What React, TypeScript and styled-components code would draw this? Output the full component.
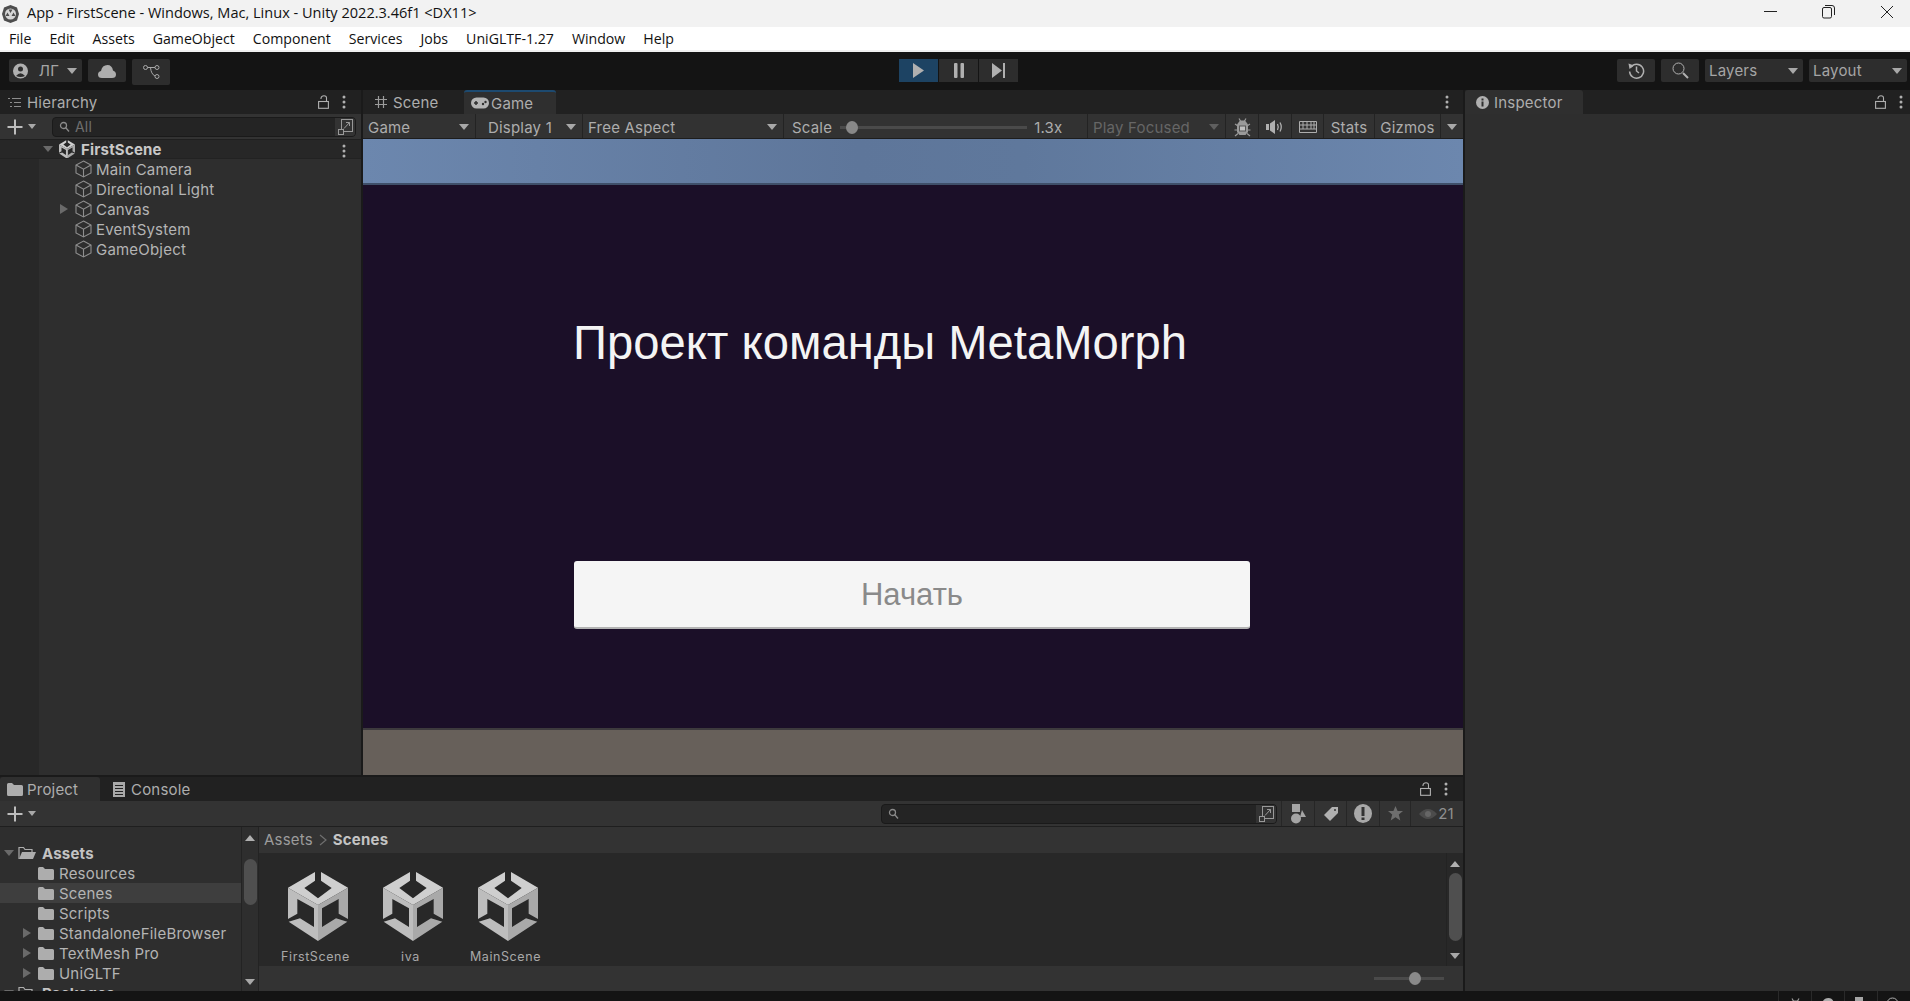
import React from 'react';
import styled, { createGlobalStyle } from 'styled-components';

const Global = createGlobalStyle`
  html, body {
    margin: 0;
    padding: 0;
    background: #141414;
    overflow: hidden;
  }
  * { box-sizing: border-box; }
`;

const Root = styled.div`
  width: 1910px;
  height: 1001px;
  display: flex;
  flex-direction: column;
  overflow: hidden;
  font-family: Inter, "Liberation Sans", sans-serif;
  font-size: 15px;
  letter-spacing: 0.2px;
  color: #b4b4b4;
  background: #141414;
`;

/* window chrome */
const TitleBar = styled.div`
  height: 27px;
  flex: none;
  background: #f2f2f2;
  display: flex;
  align-items: center;
  padding-left: 2px;
  color: #111;
  font-family: "Open Sans", "Liberation Sans", sans-serif;
  font-size: 14.55px;
  letter-spacing: 0;
`;

const TitleText = styled.span`
  margin: 0 0 3px 8px;
`;

const WindowButtons = styled.div`
  margin-left: auto;
  display: flex;
  align-items: center;
  height: 100%;
  padding: 0 16px 3px 0;
  gap: 45px;
  color: #222;
`;

const MenuBar = styled.div`
  height: 25px;
  flex: none;
  background: #fff;
  border-bottom: 2px solid #f0f0f0;
  display: flex;
  align-items: center;
  color: #111;
  font-family: "Open Sans", "Liberation Sans", sans-serif;
  font-size: 14.15px;
  letter-spacing: 0;
`;

const MenuItem = styled.span`
  padding: 0 9px;
`;

/* main toolbar */
const TopToolbar = styled.div`
  height: 38px;
  flex: none;
  background: #141414;
  display: grid;
  grid-template-columns: 1fr auto 1fr;
  align-items: start;
  padding: 7px 3px 0 9px;
`;

const ToolGroup = styled.div<{ $end?: boolean }>`
  display: flex;
  gap: 6px;
  justify-content: ${(p) => (p.$end ? 'flex-end' : 'flex-start')};
`;

const ToolButton = styled.div<{ $w: number; $h?: number }>`
  width: ${(p) => p.$w}px;
  height: ${(p) => p.$h || 23}px;
  background: #2d2d2d;
  border-radius: 2px;
  display: flex;
  align-items: center;
  justify-content: center;
  color: #a5a5a5;
  flex: none;
`;

const Dropdown = styled(ToolButton)`
  justify-content: space-between;
  padding: 0 5px 0 4px;
`;

const AccountName = styled.span`
  margin-left: 3px;
`;

const PlayGroup = styled.div`
  display: flex;
  gap: 1px;
  margin-left: 1px;
`;

const PlayButton = styled.div<{ $active?: boolean }>`
  width: 39px;
  height: 23px;
  background: ${(p) => (p.$active ? '#1d4363' : '#2d2d2d')};
  display: flex;
  align-items: center;
  justify-content: center;
  color: #b0b0b0;
`;

/* dock */
const Workspace = styled.div`
  height: 901px;
  flex: none;
  display: flex;
  background: #1a1a1a;
`;

const LeftColumn = styled.div`
  width: 1463px;
  flex: none;
  display: flex;
  flex-direction: column;
  gap: 2px;
`;

const TopRow = styled.div`
  height: 685px;
  flex: none;
  display: flex;
  gap: 2px;
`;

const Panel = styled.div<{ $w?: number }>`
  ${(p) => (p.$w ? `width: ${p.$w}px; flex: none;` : 'flex: 1; min-width: 0;')}
  display: flex;
  flex-direction: column;
  background: #2e2e2e;
  overflow: hidden;
`;

const InspectorPanel = styled(Panel)`
  margin-left: 2px;
`;

const TabStrip = styled.div`
  height: 24px;
  flex: none;
  background: #212121;
  display: flex;
  align-items: stretch;
  position: relative;
`;

const Tab = styled.div<{ $w: number; $on?: boolean; $blue?: boolean; $pad?: number; $gap?: number }>`
  width: ${(p) => p.$w}px;
  flex: none;
  display: flex;
  align-items: center;
  gap: ${(p) => p.$gap ?? 4}px;
  padding-left: ${(p) => p.$pad ?? 8}px;
  background: ${(p) => (p.$on ? '#2f2f2f' : 'transparent')};
  border-top: ${(p) => (p.$blue ? '2px solid #1d4a70' : 'none')};
  border-radius: 3px 3px 0 0;
  color: #adadad;
`;

const TabTools = styled.div<{ $pr: number }>`
  margin-left: auto;
  display: flex;
  align-items: center;
  gap: 13px;
  padding-right: ${(p) => p.$pr}px;
  color: #b0b0b0;
`;

const PanelBar = styled.div`
  height: 26px;
  flex: none;
  background: #333;
  border-bottom: 1px solid #1f1f1f;
  display: flex;
  align-items: center;
`;

const AddButton = styled.div`
  width: 52px;
  flex: none;
  display: flex;
  align-items: center;
  padding-left: 7px;
  gap: 5px;
  color: #bdbdbd;
`;

const SearchField = styled.div<{ $w: number; $ml?: number }>`
  width: ${(p) => p.$w}px;
  flex: none;
  margin-left: ${(p) => p.$ml ?? 0}px;
  height: 20px;
  background: #242424;
  border: 1px solid #1a1a1a;
  border-radius: 4px;
  display: flex;
  align-items: center;
  padding-left: 6px;
  gap: 2px;
  color: #6f6f6f;
  font-size: 14px;
  overflow: hidden;
`;

const SearchEnd = styled.div`
  margin-left: auto;
  width: 20px;
  height: 100%;
  flex: none;
  background: #333;
  display: flex;
  align-items: center;
  justify-content: center;
  color: #999;
`;

/* hierarchy */
const TreeArea = styled.div`
  flex: 1;
  background: linear-gradient(to right, #282828 39px, #2e2e2e 39px);
`;

const SceneRow = styled.div`
  height: 19px;
  background: #272727;
  border-bottom: 1px solid #222;
  display: flex;
  align-items: center;
  padding-left: 43px;
  color: #c8c8c8;
  font-weight: 700;
  gap: 6px;
  position: relative;
`;

const SceneMenu = styled.div`
  position: absolute;
  right: 15px;
  top: 3px;
  color: #b0b0b0;
`;

const TreeRow = styled.div<{ $pad: number; $on?: boolean }>`
  height: 20px;
  display: flex;
  align-items: center;
  padding-left: ${(p) => p.$pad}px;
  gap: 4px;
  white-space: nowrap;
  background: ${(p) => (p.$on ? '#3e3e3e' : 'transparent')};
`;

const TreeSpacer = styled.span<{ $w: number }>`
  width: ${(p) => p.$w}px;
  flex: none;
  display: flex;
  align-items: center;
`;

const FolderLabel = styled.span`
  margin-left: 1px;
`;

const BoldLabel = styled.span`
  font-weight: 700;
  color: #c4c4c4;
`;

const RootFolderLabel = styled(BoldLabel)`
  margin-left: 2px;
`;

const Caret = styled.span<{ $size?: number; $color?: string }>`
  display: inline-block;
  flex: none;
  width: 0;
  height: 0;
  border-left: ${(p) => p.$size ?? 5}px solid transparent;
  border-right: ${(p) => p.$size ?? 5}px solid transparent;
  border-top: ${(p) => (p.$size ?? 5) + 1}px solid ${(p) => p.$color ?? '#a8a8a8'};
`;

const CaretRight = styled.span`
  display: inline-block;
  flex: none;
  width: 0;
  height: 0;
  border-top: 5px solid transparent;
  border-bottom: 5px solid transparent;
  border-left: 8px solid #6a6a6a;
`;

const CaretUp = styled.span`
  display: inline-block;
  flex: none;
  width: 0;
  height: 0;
  border-left: 5px solid transparent;
  border-right: 5px solid transparent;
  border-bottom: 6px solid #b0b0b0;
`;

/* game view */
const GameBar = styled.div`
  height: 25px;
  flex: none;
  background: #323232;
  border-bottom: 1px solid #1d1d1d;
  display: flex;
  align-items: stretch;
`;

const Cell = styled.div<{ $w: number; $pl?: number; $muted?: boolean; $center?: boolean; $noLine?: boolean }>`
  width: ${(p) => p.$w}px;
  flex: none;
  display: flex;
  align-items: center;
  justify-content: ${(p) => (p.$center ? 'center' : 'space-between')};
  padding: ${(p) => (p.$center ? '2px 0 0' : `2px 6px 0 ${p.$pl ?? 5}px`)};
  border-right: ${(p) => (p.$noLine ? 'none' : '1px solid #232323')};
  color: ${(p) => (p.$muted ? '#666' : '#adadad')};
  white-space: nowrap;
`;

const ScaleCell = styled(Cell)`
  justify-content: flex-start;
  padding-left: 8px;
`;

const SliderTrack = styled.div<{ $w: number; $ml: number }>`
  width: ${(p) => p.$w}px;
  margin-left: ${(p) => p.$ml}px;
  height: 3px;
  background: #4a4a4a;
  position: relative;
  flex: none;
`;

const SliderThumb = styled.div<{ $left: number; $bg: string }>`
  position: absolute;
  left: ${(p) => p.$left}px;
  top: -5px;
  width: 12px;
  height: 13px;
  border-radius: 50%;
  background: ${(p) => p.$bg};
`;

const ScaleValue = styled.span`
  margin-left: 7px;
`;

const Sky = styled.div`
  height: 46px;
  flex: none;
  background: linear-gradient(to right, #6c87ae, #5e769a 45%, #5f789c 60%, #6c87ae);
  border-bottom: 2px solid #3f4f69;
`;

const Scene = styled.div`
  flex: 1;
  background: #1b0f28;
  padding: 132px 0 0 210px;
`;

const Heading = styled.h1`
  margin: 0;
  font-family: "Liberation Sans", Arial, sans-serif;
  font-weight: 400;
  font-size: 47.2px;
  line-height: 52px;
  letter-spacing: 0;
  color: #f4f4f4;
  white-space: nowrap;
`;

const StartButton = styled.div`
  margin: 192px 0 0 1px;
  width: 676px;
  height: 68px;
  padding-top: 2px;
  background: #f5f5f5;
  border-bottom: 2px solid #b3b3b3;
  border-radius: 3px;
  display: flex;
  align-items: center;
  justify-content: center;
  font-family: "Liberation Sans", Arial, sans-serif;
  font-size: 31px;
  letter-spacing: 0;
  color: #8a8a8a;
`;

const Ground = styled.div`
  height: 47px;
  flex: none;
  background: #67605a;
  border-top: 2px solid #3d3a3d;
`;

/* project window */
const ProjectBody = styled.div`
  flex: 1;
  display: flex;
  min-height: 0;
`;

const ProjectTree = styled.div`
  width: 241px;
  flex: none;
  padding-top: 16px;
  overflow: hidden;
`;

const Scroller = styled.div<{ $w: number }>`
  width: ${(p) => p.$w}px;
  flex: none;
  display: flex;
  flex-direction: column;
  align-items: center;
  padding: 8px 0 6px;
  border-left: 1px solid #232323;
`;

const ScrollThumb = styled.div<{ $h: number; $mt: number }>`
  width: 13px;
  height: ${(p) => p.$h}px;
  margin-top: ${(p) => p.$mt}px;
  border-radius: 7px;
  background: #4f4f4f;
`;

const ScrollDown = styled(Caret)`
  margin-top: auto;
`;

const ProjectMain = styled.div`
  flex: 1;
  display: flex;
  flex-direction: column;
  min-width: 0;
  border-left: 1px solid #232323;
`;

const Breadcrumb = styled.div`
  height: 26px;
  flex: none;
  background: #333;
  display: flex;
  align-items: center;
  padding: 0 0 1px 5px;
  gap: 6px;
  color: #9c9c9c;
`;

const AssetArea = styled.div`
  height: 113px;
  flex: none;
  background: #282828;
  display: flex;
`;

const AssetGrid = styled.div`
  flex: 1;
  display: flex;
  gap: 15px;
  padding: 18px 0 0 19px;
`;

const AssetItem = styled.div`
  width: 80px;
  display: flex;
  flex-direction: column;
  align-items: center;
  font-size: 12.5px;
  letter-spacing: 0.6px;
  color: #a8a8a8;
`;

const AssetLabel = styled.span`
  margin-top: 8px;
  margin-left: -5px;
  white-space: nowrap;
`;

const AssetScroller = styled(Scroller)`
  padding: 8px 0 7px;
`;

const Footer = styled.div`
  flex: 1;
  background: #333;
  display: flex;
  align-items: center;
  justify-content: flex-end;
  padding-right: 19px;
`;

const FilterButtons = styled.div`
  display: flex;
  align-items: stretch;
  height: 100%;
  margin-left: 4px;
  color: #a0a0a0;
`;

const FilterCell = styled.div<{ $w: number }>`
  width: ${(p) => p.$w}px;
  display: flex;
  align-items: center;
  justify-content: center;
  border-left: 1px solid #262626;
  gap: 1px;
`;

const HiddenCount = styled.span`
  color: #8f8f8f;
  font-size: 15px;
`;

/* status bar */
const StatusBar = styled.div`
  height: 10px;
  flex: none;
  background: #141414;
  display: flex;
  justify-content: flex-end;
  overflow: hidden;
`;

const StatusItem = styled.div`
  width: 33px;
  height: 18px;
  padding-top: 6px;
  border-left: 1px solid #2a2a2a;
  display: flex;
  justify-content: center;
  color: #a0a0a0;
`;

type IconProps = { s?: number };

const UnityLogo = ({ s = 60 }: IconProps) => (
  <svg width={s} height={(s * 70) / 60} viewBox="0 0 180 210">
    <path fill="#cfcfcf" d="M0 50L81 3V29L49 51L90 82L131 51L99 29V3L180 50L90 102Z" />
    <path fill="#bdbdbd" d="M0 50L90 102V210L2 152L36 142L78 168V112L28 84V128L0 144Z" />
    <path fill="#a9a9a9" d="M180 50L90 102V210L178 152L144 142L102 168V112L152 84V128L180 144Z" />
  </svg>
);

const CubeIcon = () => (
  <svg width="17" height="18" viewBox="0 0 17 18" fill="none" stroke="#8f8f8f" strokeWidth="1.1">
    <path d="M8.5 1L16 5V13L8.5 17L1 13V5Z" />
    <path d="M1 5L8.5 9.2L16 5M8.5 9.2V17" />
  </svg>
);

const Folder = ({ s = 16 }: IconProps) => (
  <svg width={s} height={(s * 13) / 16} viewBox="0 0 16 13">
    <path fill="#adadad" d="M0 1.5Q0 0 1.5 0H5L7 2H14.5Q16 2 16 3.5V11.5Q16 13 14.5 13H1.5Q0 13 0 11.5Z" />
  </svg>
);

const OpenFolder = () => (
  <svg width="18" height="14" viewBox="0 0 18 14" fill="none" stroke="#adadad" strokeWidth="1.2">
    <path d="M1 13V1.5H5.5L7 3.5H14V6" />
    <path fill="#adadad" stroke="none" d="M1 13L4 6H18L15 13Z" />
  </svg>
);

const Kebab = () => (
  <svg width="4" height="14" viewBox="0 0 4 14" fill="currentColor">
    <circle cx="2" cy="2" r="1.5" />
    <circle cx="2" cy="7" r="1.5" />
    <circle cx="2" cy="12" r="1.5" />
  </svg>
);

const Lock = () => (
  <svg width="11" height="14" viewBox="0 0 11 14" fill="none" stroke="currentColor" strokeWidth="1.1">
    <rect x="0.6" y="6.5" width="9.8" height="6.8" />
    <path d="M8.5 6.5V3Q8.5 0.7 6 0.7T3 3V4" />
  </svg>
);

const Plus = () => (
  <svg width="16" height="16" viewBox="0 0 16 16" fill="currentColor">
    <rect x="7" y="0.5" width="2" height="15" />
    <rect x="0.5" y="7" width="15" height="2" />
  </svg>
);

const Magnifier = () => (
  <svg width="14" height="12" viewBox="0 0 14 12" fill="none" stroke="#8a8a8a" strokeWidth="1.3">
    <circle cx="4.5" cy="4.5" r="3" />
    <path d="M6.8 6.8L10 10.5" />
  </svg>
);

const ExpandSearch = () => (
  <svg width="15" height="16" viewBox="0 0 15 16" fill="none" stroke="currentColor">
    <rect x="3.5" y="0.5" width="11" height="12" />
    <rect x="0.5" y="10.5" width="5" height="5" fill="#333" />
    <path d="M6 9.5L11.5 3.5M8 3.5H11.5V7" />
  </svg>
);

const GameIcon = () => (
  <svg width="18" height="12" viewBox="0 0 18 12">
    <rect x="0" y="0.5" width="18" height="11" rx="5.5" fill="#b4b4b4" />
    <path stroke="#2f2f2f" strokeWidth="1.5" d="M3 6H7M5 4V8" />
    <circle cx="12" cy="7" r="1.2" fill="#2f2f2f" />
    <circle cx="14.5" cy="5" r="1.2" fill="#2f2f2f" />
  </svg>
);

const HashIcon = () => (
  <svg width="14" height="14" viewBox="0 0 14 14" stroke="#9c9c9c" strokeWidth="1.2">
    <path d="M4.5 1V13M9.5 1V13M1 4.5H13M1 9.5H13" />
  </svg>
);

const ListIcon = () => (
  <svg width="13" height="11" viewBox="0 0 13 11" stroke="#8d8d8d" strokeWidth="1">
    <path d="M0 1.5H2M4 1.5H13M2 5.5H4M6 5.5H13M2 9.5H4M6 9.5H13" />
  </svg>
);

const InfoIcon = () => (
  <svg width="13" height="13" viewBox="0 0 13 13">
    <circle cx="6.5" cy="6.5" r="6.5" fill="#b0b0b0" />
    <rect x="5.5" y="5.5" width="2" height="5" fill="#2f2f2f" />
    <rect x="5.5" y="2.5" width="2" height="2" fill="#2f2f2f" />
  </svg>
);

const ConsoleIcon = () => (
  <svg width="12" height="15" viewBox="0 0 12 15">
    <rect width="12" height="15" fill="#a8a8a8" />
    <path stroke="#212121" d="M2 3.5H10M2 6.5H10M2 9.5H10M2 12.5H10" />
  </svg>
);

const BugIcon = () => (
  <svg width="17" height="20" viewBox="0 0 17 20" fill="none" stroke="#9a9a9a" strokeWidth="1.2">
    <path d="M5 1.5L6.5 4M12 1.5L10.5 4M1 7L4 9M16 7L13 9M0.5 13H3.5M16.5 13H13.5M1 19L4 16.5M16 19L13 16.5" />
    <path fill="#9a9a9a" stroke="none" d="M6 3.5H11L14 7.5V15L11.5 18H5.5L3 15V7.5Z" />
    <rect x="5.5" y="9" width="6" height="5" fill="#c0c0c0" stroke="#555" strokeWidth="1" />
  </svg>
);

const AudioIcon = () => (
  <svg width="18" height="16" viewBox="0 0 18 16" fill="#b0b0b0">
    <path d="M0 5H3V11H0ZM4 4.5L9 1V15L4 11.5Z" />
    <path fill="none" stroke="#b0b0b0" strokeWidth="1.3" d="M11.5 5Q13 8 11.5 11M14 3.5Q16.5 8 14 12.5" />
  </svg>
);

const GridIcon = () => (
  <svg width="18" height="14" viewBox="0 0 18 14" fill="none" stroke="#adadad">
    <path d="M0.5 1.5H17.5V12.5H0.5ZM0.5 5H17.5M0.5 9H17.5M4 1.5V9M8 1.5V9M12 1.5V9M15 1.5V9" />
  </svg>
);

const AccountIcon = () => (
  <svg width="15" height="16" viewBox="0 0 15 16">
    <circle cx="7.5" cy="8" r="7.5" fill="#b0b0b0" />
    <circle cx="7.5" cy="6" r="2.5" fill="#2d2d2d" />
    <path fill="#2d2d2d" d="M3 13Q7.5 7.5 12 13Q7.5 15 3 13Z" />
  </svg>
);

const CloudIcon = () => (
  <svg width="18" height="14" viewBox="0 0 18 14" fill="#adadad">
    <path d="M4 14Q0 14 0 10.5Q0 7.5 3 7Q4 1 9.5 1Q14 1 15 6.5Q18 7.5 18 10.5Q18 14 14 14Z" />
  </svg>
);

const CollabIcon = () => (
  <svg width="17" height="14" viewBox="0 0 17 14" fill="none" stroke="#a8a8a8">
    <circle cx="2.5" cy="2.5" r="2" />
    <circle cx="14" cy="2.5" r="2" />
    <circle cx="14" cy="11.5" r="2" />
    <path d="M4.5 2.5H12M7.5 2.5Q8 9 12 11" />
  </svg>
);

const HistoryIcon = () => (
  <svg width="17" height="17" viewBox="0 0 17 17" fill="none" stroke="#b0b0b0" strokeWidth="1.5">
    <path d="M3 5A7 7 0 1 1 1.6 9.5" />
    <path fill="#b0b0b0" stroke="none" d="M0.5 1.5L6 3.5L1.5 7Z" />
    <path d="M8.5 4.5V9L11 11" />
  </svg>
);

const SearchIcon = () => (
  <svg width="17" height="17" viewBox="0 0 17 17" fill="none" stroke="#b0b0b0">
    <circle cx="6.5" cy="6.5" r="5.5" />
    <path strokeWidth="2" d="M11 11L16 16" />
  </svg>
);

const TitleLogo = () => (
  <svg width="17" height="18" viewBox="0 0 17 18">
    <path fill="#4d4d4d" d="M8.5 0L15 2.5L17 9L15 15.5L8.5 18L2 15.5L0 9L2 2.5Z" />
    <circle cx="8.5" cy="9" r="5.5" fill="#d6d6d6" />
    <path fill="#4d4d4d" d="M6.5 4.5H10.5L8.5 8ZM3.5 11L5.5 7.5L7.5 11ZM9.5 11L11.5 7.5L13.5 11Z" />
  </svg>
);

const Shapes = () => (
  <svg width="15" height="20" viewBox="0 0 15 20" fill="#a5a5a5">
    <rect x="1" y="0" width="8" height="8" />
    <circle cx="5" cy="14.5" r="5" />
    <path d="M11 6L15 13H9Z" />
  </svg>
);

const TagIcon = () => (
  <svg width="14" height="14" viewBox="0 0 14 14" fill="#b0b0b0">
    <path d="M8 0H14V6L6 14L0 8Z" />
    <circle cx="11" cy="3" r="1" fill="#333" />
  </svg>
);

const AlertIcon = () => (
  <svg width="18" height="19" viewBox="0 0 18 19">
    <ellipse cx="9" cy="9.5" rx="9" ry="9.5" fill="#a8a8a8" />
    <rect x="7.5" y="3" width="3" height="9" fill="#333" />
    <rect x="7.5" y="13.5" width="3" height="2.5" fill="#333" />
  </svg>
);

const StarIcon = () => (
  <svg width="15" height="15" viewBox="0 0 15 15" fill="#6e6e6e">
    <path d="M7.5 0L9.6 5H15L10.8 8.4L12.3 14.5L7.5 11.2L2.7 14.5L4.2 8.4L0 5H5.4Z" />
  </svg>
);

const EyeIcon = () => (
  <svg width="18" height="12" viewBox="0 0 18 12">
    <path fill="#4c4c4c" d="M0 6Q9 -4 18 6Q9 16 0 6Z" />
    <circle cx="9" cy="6" r="3" fill="#666" />
  </svg>
);

const hierarchyItems = ['Main Camera', 'Directional Light', 'Canvas', 'EventSystem', 'GameObject'];
const menus = ['File', 'Edit', 'Assets', 'GameObject', 'Component', 'Services', 'Jobs', 'UniGLTF-1.27', 'Window', 'Help'];
const folders = [
  { name: 'Resources' },
  { name: 'Scenes', on: true },
  { name: 'Scripts' },
  { name: 'StandaloneFileBrowser', sub: true },
  { name: 'TextMesh Pro', sub: true },
  { name: 'UniGLTF', sub: true },
];
const scenes = ['FirstScene', 'iva', 'MainScene'];

const App = () => {
  return (
    <Root>
      <Global />
      <TitleBar>
        <TitleLogo />
        <TitleText>App - FirstScene - Windows, Mac, Linux - Unity 2022.3.46f1 &lt;DX11&gt;</TitleText>
        <WindowButtons>
          <svg width="13" height="2" viewBox="0 0 13 2"><rect width="13" height="1" fill="currentColor" /></svg>
          <svg width="13" height="14" viewBox="0 0 13 14" fill="none" stroke="currentColor">
            <rect x="0.5" y="2.5" width="9" height="10.5" rx="1.5" />
            <path d="M3 0.5H10Q12.5 0.5 12.5 3V10" />
          </svg>
          <svg width="14" height="14" viewBox="0 0 14 14" stroke="currentColor"><path d="M1 1L13 13M13 1L1 13" /></svg>
        </WindowButtons>
      </TitleBar>
      <MenuBar>
        {menus.map((m) => <MenuItem key={m}>{m}</MenuItem>)}
      </MenuBar>
      <TopToolbar>
        <ToolGroup>
          <Dropdown $w={73}>
            <AccountIcon />
            <AccountName>ЛГ</AccountName>
            <Caret $size={5} />
          </Dropdown>
          <ToolButton $w={38}><CloudIcon /></ToolButton>
          <ToolButton $w={38} $h={26}><CollabIcon /></ToolButton>
        </ToolGroup>
        <PlayGroup>
          <PlayButton $active>
            <svg width="11" height="15" viewBox="0 0 11 15" fill="currentColor"><path d="M0 0L11 7.5L0 15Z" /></svg>
          </PlayButton>
          <PlayButton>
            <svg width="10" height="15" viewBox="0 0 10 15" fill="currentColor">
              <rect width="3.5" height="15" rx="1" />
              <rect x="6.5" width="3.5" height="15" rx="1" />
            </svg>
          </PlayButton>
          <PlayButton>
            <svg width="13" height="15" viewBox="0 0 13 15" fill="currentColor">
              <path d="M0 0L10 7.5L0 15Z" />
              <rect x="11" width="2" height="15" />
            </svg>
          </PlayButton>
        </PlayGroup>
        <ToolGroup $end>
          <ToolButton $w={38}><HistoryIcon /></ToolButton>
          <ToolButton $w={38}><SearchIcon /></ToolButton>
          <Dropdown $w={98}>Layers<Caret /></Dropdown>
          <Dropdown $w={98}>Layout<Caret /></Dropdown>
        </ToolGroup>
      </TopToolbar>

      <Workspace>
        <LeftColumn>
          <TopRow>
            <Panel $w={361}>
              <TabStrip>
                <Tab $w={119} $gap={6}><ListIcon />Hierarchy</Tab>
                <TabTools $pr={15}><Lock /><Kebab /></TabTools>
              </TabStrip>
              <PanelBar>
                <AddButton><Plus /><Caret $size={4} /></AddButton>
                <SearchField $w={304}>
                  <Magnifier />
                  All
                  <SearchEnd><ExpandSearch /></SearchEnd>
                </SearchField>
              </PanelBar>
              <TreeArea>
                <SceneRow>
                  <Caret $size={5} $color="#6a6a6a" />
                  <UnityLogo s={16} />
                  FirstScene
                  <SceneMenu><Kebab /></SceneMenu>
                </SceneRow>
                {hierarchyItems.map((name) => (
                  <TreeRow key={name} $pad={60}>
                    <TreeSpacer $w={11}>{name === 'Canvas' && <CaretRight />}</TreeSpacer>
                    <CubeIcon />
                    {name}
                  </TreeRow>
                ))}
              </TreeArea>
            </Panel>

            <Panel>
              <TabStrip>
                <Tab $w={101} $pad={11} $gap={5}><HashIcon />Scene</Tab>
                <Tab $w={92} $on $blue $pad={7} $gap={2}><GameIcon />Game</Tab>
                <TabTools $pr={14}><Kebab /></TabTools>
              </TabStrip>
              <GameBar>
                <Cell $w={113}>Game<Caret /></Cell>
                <Cell $w={107} $pl={12}>Display 1<Caret /></Cell>
                <Cell $w={201}>Free Aspect<Caret /></Cell>
                <ScaleCell $w={304}>
                  Scale
                  <SliderTrack $w={187} $ml={8}><SliderThumb $left={6} $bg="#888" /></SliderTrack>
                  <ScaleValue>1.3x</ScaleValue>
                </ScaleCell>
                <Cell $w={138} $muted>Play Focused<Caret $color="#5f5f5f" /></Cell>
                <Cell $w={33} $center><BugIcon /></Cell>
                <Cell $w={33} $center><AudioIcon /></Cell>
                <Cell $w={32} $center><GridIcon /></Cell>
                <Cell $w={51} $center>Stats</Cell>
                <Cell $w={66} $center>Gizmos</Cell>
                <Cell $w={21} $center $noLine><Caret /></Cell>
              </GameBar>
              <Sky />
              <Scene>
                <Heading>Проект команды MetaMorph</Heading>
                <StartButton>Начать</StartButton>
              </Scene>
              <Ground />
            </Panel>
          </TopRow>

          <Panel>
            <TabStrip>
              <Tab $w={100} $on $pad={7}><Folder />Project</Tab>
              <Tab $w={120} $pad={13} $gap={6}><ConsoleIcon />Console</Tab>
              <TabTools $pr={15}><Lock /><Kebab /></TabTools>
            </TabStrip>
            <PanelBar>
              <AddButton><Plus /><Caret $size={4} /></AddButton>
              <SearchField $w={396} $ml={829}>
                <Magnifier />
                <SearchEnd><ExpandSearch /></SearchEnd>
              </SearchField>
              <FilterButtons>
                <FilterCell $w={33}><Shapes /></FilterCell>
                <FilterCell $w={32}><TagIcon /></FilterCell>
                <FilterCell $w={33}><AlertIcon /></FilterCell>
                <FilterCell $w={31}><StarIcon /></FilterCell>
                <FilterCell $w={52}><EyeIcon /><HiddenCount>21</HiddenCount></FilterCell>
              </FilterButtons>
            </PanelBar>
            <ProjectBody>
              <ProjectTree>
                <TreeRow $pad={4}>
                  <Caret $color="#6a6a6a" />
                  <OpenFolder />
                  <RootFolderLabel>Assets</RootFolderLabel>
                </TreeRow>
                {folders.map((f) => (
                  <TreeRow key={f.name} $pad={23} $on={f.on}>
                    <TreeSpacer $w={11}>{f.sub && <CaretRight />}</TreeSpacer>
                    <Folder />
                    <FolderLabel>{f.name}</FolderLabel>
                  </TreeRow>
                ))}
                <TreeRow $pad={4}>
                  <Caret $color="#6a6a6a" />
                  <OpenFolder />
                  <RootFolderLabel>Packages</RootFolderLabel>
                </TreeRow>
              </ProjectTree>
              <Scroller $w={17}>
                <CaretUp />
                <ScrollThumb $h={46} $mt={18} />
                <ScrollDown $size={5} />
              </Scroller>
              <ProjectMain>
                <Breadcrumb>
                  Assets
                  <svg width="8" height="12" viewBox="0 0 8 12" fill="none" stroke="#6f6f6f" strokeWidth="1.2"><path d="M1 1L7 6L1 11" /></svg>
                  <BoldLabel>Scenes</BoldLabel>
                </Breadcrumb>
                <AssetArea>
                  <AssetGrid>
                    {scenes.map((s) => (
                      <AssetItem key={s}>
                        <UnityLogo />
                        <AssetLabel>{s}</AssetLabel>
                      </AssetItem>
                    ))}
                  </AssetGrid>
                  <AssetScroller $w={17}>
                    <CaretUp />
                    <ScrollThumb $h={68} $mt={6} />
                    <ScrollDown $size={5} />
                  </AssetScroller>
                </AssetArea>
                <Footer>
                  <SliderTrack $w={70} $ml={0}><SliderThumb $left={35} $bg="#8a8a8a" /></SliderTrack>
                </Footer>
              </ProjectMain>
            </ProjectBody>
          </Panel>
        </LeftColumn>

        <InspectorPanel>
          <TabStrip>
            <Tab $w={118} $on $pad={11} $gap={5}><InfoIcon />Inspector</Tab>
            <TabTools $pr={7}><Lock /><Kebab /></TabTools>
          </TabStrip>
        </InspectorPanel>
      </Workspace>

      <StatusBar>
        <StatusItem><BugIcon /></StatusItem>
        <StatusItem><CloudIcon /></StatusItem>
        <StatusItem><Shapes /></StatusItem>
        <StatusItem><SearchIcon /></StatusItem>
      </StatusBar>
    </Root>
  );
};

export default App;
